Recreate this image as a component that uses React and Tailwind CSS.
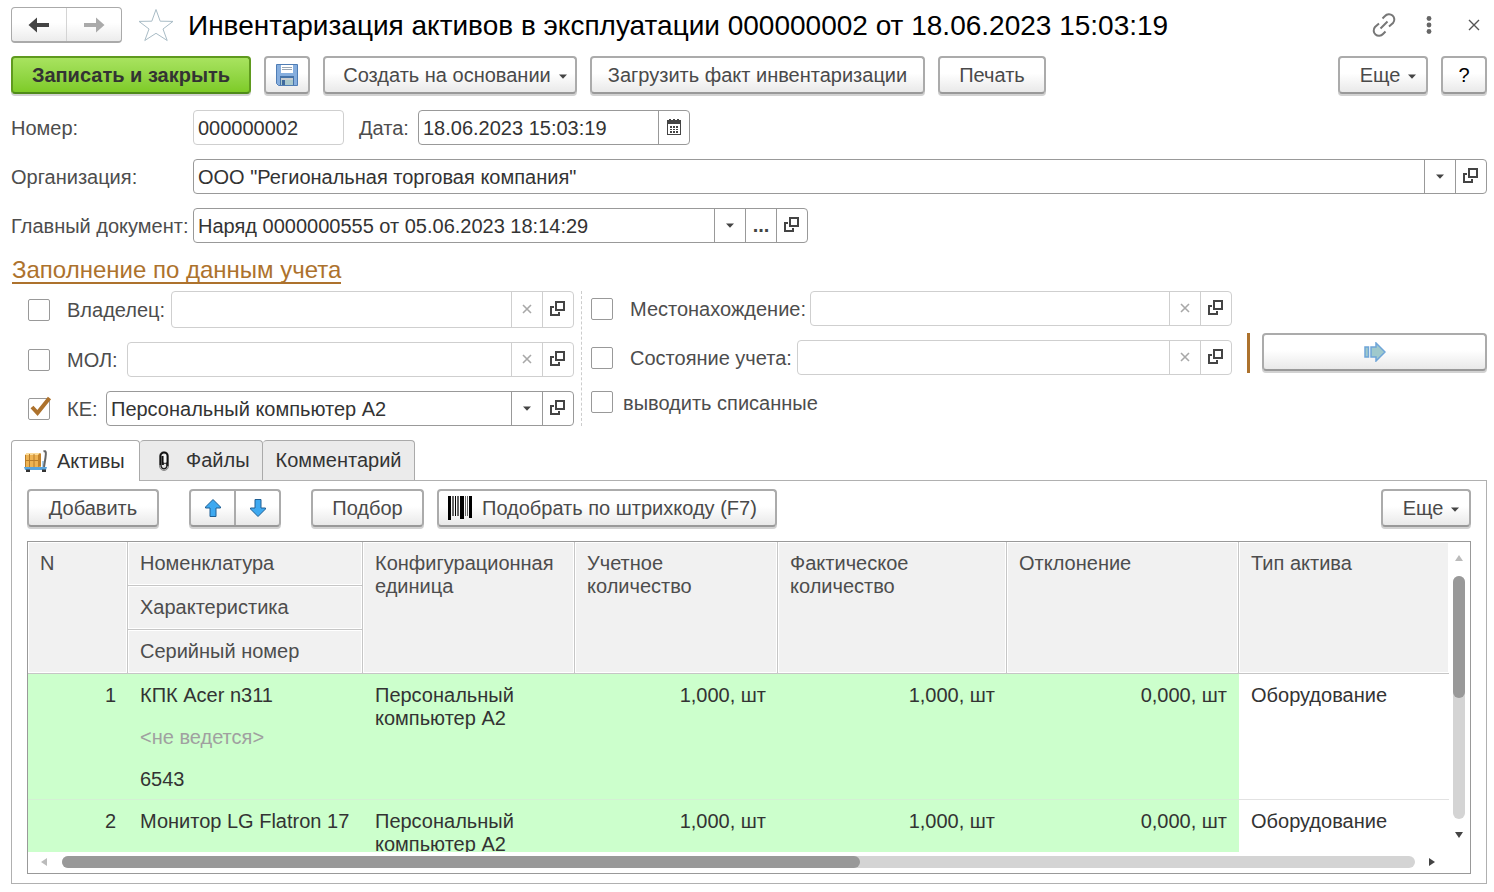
import React from "react";

const BTN =
  "flex h-[38px] items-center rounded-[4px] border-2 border-[#ababab] border-b-[#999] bg-linear-to-b from-white from-45% to-[#e9e9e9] text-[#4a4a4a] whitespace-nowrap shadow-[0_2px_0_#d2d2d2]";

function Caret({ className = "" }) {
  return (
    <svg width="8" height="5" viewBox="0 0 8 5" className={className} aria-hidden="true">
      <path d="M0 0.5h8L4 4.8z" fill="#444" />
    </svg>
  );
}

function OpenIcon() {
  return (
    <svg width="16" height="16" viewBox="0 0 16 16" fill="none" stroke="#444" strokeWidth="2" aria-hidden="true">
      <path d="M6 1h8v8H6z" />
      <path d="M4 6H1v8h8v-3" />
    </svg>
  );
}

function ClearIcon() {
  return (
    <svg width="10" height="10" viewBox="0 0 10 10" stroke="#a8a8a8" strokeWidth="1.6" aria-hidden="true">
      <path d="M1 1l8 8M9 1L1 9" />
    </svg>
  );
}

function CalendarIcon() {
  return (
    <svg width="14" height="16" viewBox="0 0 14 16" fill="#444" aria-hidden="true">
      <path d="M0 1h2V0h2v1h2V0h2v1h2V0h2v1h2v15H0zM1 5v10h12V5z" fillRule="evenodd" />
      <path d="M3 7h2v2H3zM6 7h2v2H6zM9 7h2v2H9zM3 10h2v1H3zM6 10h2v1H6zM9 10h2v1H9zM3 12h2v2H3zM6 12h2v2H6zM9 12h2v2H9z" />
    </svg>
  );
}

function SaveIcon() {
  return (
    <svg width="22" height="22" viewBox="0 0 22 22" aria-hidden="true">
      <path d="M0.500 0.500h21v21h-19l-2-2z" fill="#86aede" stroke="#4f7db5" />
      <path d="M5 1h12v8H5z" fill="#fff" />
      <path d="M6 3h10v1H6zM6 5h10v1H6z" fill="#9aa7b5" />
      <path d="M4 12h14v9H4z" fill="#4673a8" />
      <path d="M5 14h12v7H5z" fill="#a9c8cc" />
      <path d="M5 14h12v2H5z" fill="#c9cdd0" />
      <path d="M6 16h3v5H6z" fill="#3f6a9e" />
    </svg>
  );
}

function NavArrow({ flip, color }) {
  return (
    <svg width="22" height="16" viewBox="0 0 22 16" className={flip ? "rotate-180" : ""} aria-hidden="true">
      <path d="M0.500 8L9 0.500V6h12v4H9v5.500z" fill={color} />
    </svg>
  );
}

function MoveArrow({ down }) {
  return (
    <svg width="18" height="20" viewBox="0 0 18 20" className={down ? "rotate-180" : ""} aria-hidden="true">
      <path d="M9 1.500L16.500 9v1H12v8.500H6V10H1.500V9z" fill="#3ea9f0" stroke="#1f5f94" strokeLinejoin="round" />
    </svg>
  );
}

function CartIcon() {
  return (
    <svg width="24" height="24" viewBox="0 0 24 24" aria-hidden="true">
      <path d="M1 6l2-2h13l1 2v12H1z" fill="#eeb352" />
      <path d="M1 6l2-2h13l-1 2z" fill="#fbdc9c" />
      <path d="M14 6l2-2 1 1v12l-3 1z" fill="#c4832a" />
      <path d="M1 11.500h13M5.500 5v13M10 5v13M1.500 6v12" stroke="#b87d2a" />
      <path d="M18 12h3v6h-3z" fill="#a9cde8" />
      <path d="M19.500 2.500c3-1.500 2.500 2 2 6l-1.500 9.500" fill="none" stroke="#666" strokeWidth="2" />
      <path d="M0 18h23l-1 3H1z" fill="#58a3dc" />
      <path d="M2 20.500h4v2.500H2zM18 20.500h4v2.500h-4z" fill="#333" />
    </svg>
  );
}

function ClipIcon() {
  return (
    <svg width="12" height="22" viewBox="0 0 12 22" fill="none" aria-hidden="true">
      <rect x="1.500" y="1.500" width="9" height="19" rx="4.500" fill="#e4e4e4" stroke="#8a8a8a" />
      <path d="M2.500 15V6c0-4.500 7-4.500 7 0v10" stroke="#111" strokeWidth="1.800" />
      <path d="M4.500 6v9" stroke="#111" strokeWidth="2" />
      <path d="M3 15c0 5 6 5 6 0 0-3-4-3-4 0" stroke="#222" strokeWidth="1.400" />
      <path d="M7 5v8" stroke="#fff" strokeWidth="1.500" />
    </svg>
  );
}

function BarcodeIcon() {
  return (
    <svg width="24" height="24" viewBox="0 0 24 24" aria-hidden="true">
      <path d="M0 0h3v24H0zM12 0h4v23h-4zM21 0h3v22h-3zM7 0h1v20H7z" fill="#000" />
      <path d="M4 0h2v20H4zM9 0h2v20H9zM17 0h1v20h-1zM19 0h1v20h-1z" fill="#666" />
    </svg>
  );
}

function Tri({ dir, color }) {
  const d = {
    up: "M4 1l4 6H0z",
    down: "M4 7l4-6H0z",
    left: "M1 4l6-4v8z",
    right: "M7 4L1 0v8z",
  }[dir];
  return (
    <svg width="8" height="8" viewBox="0 0 8 8" aria-hidden="true">
      <path d={d} fill={color} />
    </svg>
  );
}

function Field({ id, value = "", icons = [], muted, className = "" }) {
  const edge = muted ? "border-[#cfcfcf]" : "border-[#999]";
  const names = { drop: "Выбрать из списка", open: "Открыть", clear: "Очистить", dots: "Подобрать", cal: "Календарь" };
  return (
    <div className={`flex min-h-[35px] min-w-0 rounded-[4px] border bg-white ${edge} ${className}`}>
      <input id={id} defaultValue={value} className="min-w-0 flex-1 bg-transparent px-1 pt-0.5 text-[#333] outline-none" />
      {icons.map((k) => (
        <button key={k} type="button" aria-label={names[k]} className={`flex w-[31px] shrink-0 items-center justify-center border-l pb-px ${edge}`}>
          {k === "drop" && <Caret />}
          {k === "open" && <OpenIcon />}
          {k === "clear" && <ClearIcon />}
          {k === "cal" && <CalendarIcon />}
          {k === "dots" && <span className="font-bold text-[#444]">...</span>}
        </button>
      ))}
    </div>
  );
}

function Check({ id, label, checked }) {
  return (
    <span className="relative block size-[22px] shrink-0">
      <input id={id} type="checkbox" aria-label={label} defaultChecked={checked} className="peer block size-[22px] appearance-none rounded-[2px] border border-[#999] bg-white" />
      <svg width="24" height="24" viewBox="0 0 24 24" className="pointer-events-none absolute -top-[3px] left-0 hidden peer-checked:block" aria-hidden="true">
        <path d="M4 12l5.500 6L21.500 3" fill="none" stroke="#ad722d" strokeWidth="4" />
      </svg>
    </span>
  );
}

const ROWS = [
  { n: 1, name: "КПК Acer n311", feature: "<не ведется>", serial: "6543" },
  { n: 2, name: "Монитор LG Flatron 17", feature: "", serial: "" },
];

const LABEL = "shrink-0 pt-0.5 whitespace-nowrap";
const TH = "border-r border-b border-[#c6c6c6] bg-[#f1f1f1] px-3 pt-[10px] text-left align-top font-normal text-[#4d4d4d] shadow-[inset_0_0_0_1px_#fff]";
const TD = "h-[126px] border-b border-[#d4f0d4] bg-[#ccffcc] px-3 pt-[10px] align-top";

export default function App() {
  return (
    <main className="bg-white pt-[7px] pr-[7px] pb-2 pl-[11px] font-['Liberation_Sans',Arial,sans-serif] text-[20px] leading-[23px] text-[#4d4d4d]">
      <header className="flex h-9 items-center">
        <div className="flex h-9 w-[111px] shrink-0 rounded-[4px] border border-[#aaa] border-b-2 bg-linear-to-b from-white from-45% to-[#ececec]">
          <button type="button" aria-label="Назад" className="flex flex-1 items-center justify-center border-r border-[#d4d4d4]"><NavArrow color="#444" /></button>
          <button type="button" aria-label="Вперед" className="flex flex-1 items-center justify-center"><NavArrow flip color="#aaa" /></button>
        </div>
        <button type="button" aria-label="В избранное" className="ml-4 shrink-0">
          <svg width="36" height="34" viewBox="0 0 36 34" fill="none" stroke="#a9bcc6" aria-hidden="true">
            <path d="M18 1.500l4.200 11.700 12.800.200L25 21l4.200 11.500L18 25.300 6.800 32.500 11 21 1 13.400l12.800-.200z" />
          </svg>
        </button>
        <h1 className="ml-[14px] min-w-0 flex-1 truncate pt-0.5 text-[28px] leading-9 text-black">Инвентаризация активов в эксплуатации 000000002 от 18.06.2023 15:03:19</h1>
        <div className="flex shrink-0 items-center pr-[7px]">
          <button type="button" aria-label="Ссылка">
            <svg width="24" height="24" viewBox="0 0 24 24" fill="none" stroke="#777" strokeWidth="2" aria-hidden="true">
              <path d="M10.500 5.500l2.500-2.500a5 5 0 0 1 8 7l-4 3.500M13.500 18.500L11 21a5 5 0 0 1-8-7l4-3.500M8.500 15.500l7-7" />
            </svg>
          </button>
          <button type="button" aria-label="Меню" className="ml-[30px]">
            <svg width="6" height="18" viewBox="0 0 6 18" fill="#666" aria-hidden="true"><circle cx="3" cy="2.500" r="2.400" /><circle cx="3" cy="9" r="2.400" /><circle cx="3" cy="15.500" r="2.400" /></svg>
          </button>
          <button type="button" aria-label="Закрыть" className="ml-9">
            <svg width="12" height="12" viewBox="0 0 12 12" stroke="#555" strokeWidth="1.400" aria-hidden="true"><path d="M1 1l10 10M11 1L1 11" /></svg>
          </button>
        </div>
      </header>

      <div className="mt-[13px] flex gap-[13px]">
        <button type="button" className="flex h-[38px] w-60 items-center justify-center rounded-[4px] border-2 border-[#5f9a1e] border-b-[#4f8a1a] bg-linear-to-b from-[#a8e35f] to-[#7ecb26] font-bold whitespace-nowrap text-[#333] shadow-[0_2px_0_#d2d2d2]">Записать и закрыть</button>
        <button type="button" aria-label="Записать" className={`${BTN} w-[46px] justify-center`}><SaveIcon /></button>
        <button type="button" className={`${BTN} w-[254px] justify-center gap-2 pl-[10px]`}>Создать на основании<Caret className="mt-[3px]" /></button>
        <button type="button" className={`${BTN} w-[335px] justify-center`}>Загрузить факт инвентаризации</button>
        <button type="button" className={`${BTN} w-[108px] justify-center`}>Печать</button>
        <button type="button" className={`${BTN} ml-auto w-[90px] justify-center gap-2 pl-[10px]`}>Еще<Caret className="mt-[3px]" /></button>
        <button type="button" aria-label="Справка" className={`${BTN} w-[46px] justify-center text-black`}>?</button>
      </div>

      <div className="mt-4 grid grid-cols-[182px_minmax(0,1fr)] items-center gap-y-[14px]">
        <label htmlFor="num" className={LABEL}>Номер:</label>
        <div className="flex items-center">
          <Field id="num" value="000000002" muted className="w-[151px]" />
          <label htmlFor="date" className={`${LABEL} ml-[15px] w-[59px]`}>Дата:</label>
          <Field id="date" value="18.06.2023 15:03:19" icons={["cal"]} className="w-[272px]" />
        </div>
        <label htmlFor="org" className={LABEL}>Организация:</label>
        <Field id="org" value={'ООО "Региональная торговая компания"'} icons={["drop", "open"]} />
        <label htmlFor="doc" className={LABEL}>Главный документ:</label>
        <Field id="doc" value="Наряд 0000000555 от 05.06.2023 18:14:29" icons={["drop", "dots", "open"]} className="w-[615px]" />
      </div>

      <h2 className="mt-[14px] ml-px w-fit border-b-2 border-[#ad722d] pt-px text-[24px] leading-6 text-[#ad722d]">Заполнение по данным учета</h2>

      <section className="mt-[7px] grid grid-cols-[minmax(0,571fr)_minmax(0,650fr)_minmax(0,255fr)]">
        <div className="flex flex-col gap-[14px] border-r border-dashed border-[#ccc] pr-[7px] pl-[17px]">
          <div className="flex items-center gap-[17px]">
            <Check id="c1" label="Отбор по владельцу" />
            <div className="flex min-w-0 flex-1 items-center">
              <label htmlFor="f1" className={`${LABEL} w-[104px]`}>Владелец:</label>
              <Field id="f1" muted icons={["clear", "open"]} className="h-[37px] flex-1" />
            </div>
          </div>
          <div className="flex items-center gap-[17px]">
            <Check id="c2" label="Отбор по МОЛ" />
            <div className="flex min-w-0 flex-1 items-center">
              <label htmlFor="f2" className={`${LABEL} w-[60px]`}>МОЛ:</label>
              <Field id="f2" muted icons={["clear", "open"]} className="flex-1" />
            </div>
          </div>
          <div className="flex items-center gap-[17px]">
            <Check id="c3" label="Отбор по КЕ" checked />
            <div className="flex min-w-0 flex-1 items-center">
              <label htmlFor="f3" className={`${LABEL} w-[39px]`}>КЕ:</label>
              <Field id="f3" value="Персональный компьютер А2" icons={["drop", "open"]} className="flex-1" />
            </div>
          </div>
        </div>
        <div className="flex flex-col gap-[14px] pl-[9px]">
          <div className="flex items-center gap-[17px]">
            <Check id="c4" label="Отбор по местонахождению" />
            <div className="flex min-w-0 flex-1 items-center">
              <label htmlFor="f4" className={`${LABEL} w-[180px]`}>Местонахождение:</label>
              <Field id="f4" muted icons={["clear", "open"]} className="flex-1" />
            </div>
          </div>
          <div className="flex items-center gap-[17px]">
            <Check id="c5" label="Отбор по состоянию учета" />
            <div className="flex min-w-0 flex-1 items-center">
              <label htmlFor="f5" className={`${LABEL} w-[167px]`}>Состояние учета:</label>
              <Field id="f5" muted icons={["clear", "open"]} className="flex-1" />
            </div>
          </div>
          <div className="flex h-[26px] items-center gap-[10px]">
            <Check id="c6" label="выводить списанные" />
            <label htmlFor="c6" className={LABEL}>выводить списанные</label>
          </div>
        </div>
        <div className="mt-[42px] ml-[15px] flex h-10 border-l-[3px] border-[#ad722d] pl-3">
          <button type="button" aria-label="Заполнить" className={`${BTN} flex-1 justify-center`}>
            <svg width="22" height="20" viewBox="0 0 22 20" fill="#9fc9cc" stroke="#6fa5d8" strokeWidth="1.500" aria-hidden="true">
              <path d="M1 5h3.500v10H1zM7 5h5V1l9 9-9 9v-4H7z" />
            </svg>
          </button>
        </div>
      </section>

      <div role="tablist" className="mt-[14px] flex">
        <button role="tab" aria-selected="true" type="button" className="relative z-10 -mb-px flex h-[41px] w-[129px] items-center gap-[9px] rounded-t-[4px] border border-b-0 border-[#aaa] bg-white pl-3 text-[#333]"><CartIcon />Активы</button>
        <button role="tab" aria-selected="false" type="button" className="flex h-10 w-[123px] items-center gap-4 rounded-t-[4px] border border-b-0 border-l-0 border-[#aaa] bg-[#ebebeb] pl-[18px] text-[#333]"><ClipIcon />Файлы</button>
        <button role="tab" aria-selected="false" type="button" className="flex h-10 w-[152px] items-center justify-center rounded-t-[4px] border border-b-0 border-l-0 border-[#aaa] bg-[#ebebeb] text-[#333]">Комментарий</button>
      </div>

      <section className="border border-[#b0b0b0] px-[15px] pt-2 pb-[9px]">
        <div className="flex">
          <button type="button" className={`${BTN} w-[132px] justify-center`}>Добавить</button>
          <div className={`${BTN} ml-[30px] w-[92px]`}>
            <button type="button" aria-label="Вверх" className="flex h-full flex-1 items-center justify-center border-r-2 border-[#ababab]"><MoveArrow /></button>
            <button type="button" aria-label="Вниз" className="flex h-full flex-1 items-center justify-center"><MoveArrow down /></button>
          </div>
          <button type="button" className={`${BTN} ml-[30px] w-[113px] justify-center`}>Подбор</button>
          <button type="button" className={`${BTN} ml-[13px] w-[340px] gap-[10px] pl-[9px]`}><BarcodeIcon />Подобрать по штрихкоду (F7)</button>
          <button type="button" className={`${BTN} ml-auto w-[90px] justify-center gap-2 pl-[10px]`}>Еще<Caret className="mt-[3px]" /></button>
        </div>

        <div className="mt-[14px] border border-[#999]">
          <div className="flex">
            <div className="h-[310px] min-w-0 flex-1 overflow-hidden">
              <table className="w-full table-fixed border-separate border-spacing-0">
                <colgroup>
                  <col className="w-[100px]" />
                  <col className="w-[235px]" />
                  <col className="w-[212px]" />
                  <col className="w-[203px]" />
                  <col className="w-[229px]" />
                  <col className="w-[232px]" />
                  <col />
                </colgroup>
                <thead>
                  <tr className="h-11">
                    <th rowSpan={3} className={TH}>N</th>
                    <th className={TH}>Номенклатура</th>
                    <th rowSpan={3} className={TH}>Конфигурационная единица</th>
                    <th rowSpan={3} className={TH}>Учетное<br />количество</th>
                    <th rowSpan={3} className={TH}>Фактическое количество</th>
                    <th rowSpan={3} className={TH}>Отклонение</th>
                    <th rowSpan={3} className={`${TH} border-r-0`}>Тип актива</th>
                  </tr>
                  <tr className="h-11"><th className={TH}>Характеристика</th></tr>
                  <tr className="h-11"><th className={TH}>Серийный номер</th></tr>
                </thead>
                <tbody className="text-[#333]">
                  {ROWS.map((r) => (
                    <tr key={r.n}>
                      <td className={`${TD} text-right`}>{r.n}</td>
                      <td className={`${TD} whitespace-nowrap`}>
                        <div className="flex flex-col gap-[19px]">
                          <span>{r.name}</span>
                          {r.feature && <span className="text-[#a0a0a0]">{r.feature}</span>}
                          {r.serial && <span>{r.serial}</span>}
                        </div>
                      </td>
                      <td className={TD}>Персональный компьютер А2</td>
                      <td className={`${TD} text-right`}>1,000, шт</td>
                      <td className={`${TD} text-right`}>1,000, шт</td>
                      <td className={`${TD} text-right`}>0,000, шт</td>
                      <td className="border-b border-[#e2e2e2] px-3 pt-[10px] align-top">Оборудование</td>
                    </tr>
                  ))}
                </tbody>
              </table>
            </div>
            <div className="flex w-[21px] flex-col items-center pt-3 pr-px pb-[13px]">
              <Tri dir="up" color="#bbb" />
              <div className="mt-[14px] mb-3 w-3 flex-1 rounded-full bg-[#d4d4d4]">
                <div className="h-1/2 rounded-full bg-[#999]" />
              </div>
              <Tri dir="down" color="#444" />
            </div>
          </div>
          <div className="flex h-[21px] items-center pr-[34px] pb-px pl-3">
            <Tri dir="left" color="#bbb" />
            <div className="mr-[13px] ml-[14px] h-3 flex-1 rounded-full bg-[#d4d4d4]">
              <div className="h-3 w-[59%] rounded-full bg-[#999]" />
            </div>
            <Tri dir="right" color="#444" />
          </div>
        </div>
      </section>
    </main>
  );
}
